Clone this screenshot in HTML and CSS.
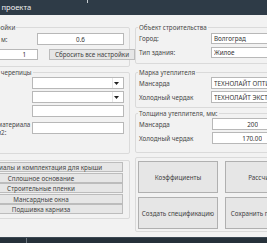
FILE: index.html
```html
<!DOCTYPE html>
<html lang="ru">

<head>
    <meta charset="UTF-8">
    <meta name="viewport" content="width=device-width, initial-scale=1.0">
    <title>Параметры проекта</title>
    <link rel="stylesheet" href="styles.css">
</head>

<body>
    <div class="screen">
        <div class="window">
            <div class="titlebar">
                <span class="title">Параметры проекта</span>
                <span class="tick"></span>
            </div>

            <div class="content">
                <div class="col col-left">
                    <fieldset class="group g-common">
                        <legend>Общие настройки</legend>
                        <div class="row row-step">
                            <label for="step">Длина ската, м:</label>
                            <input class="field center" type="text" id="step" value="0.6" readonly>
                        </div>
                        <div class="row row-reset">
                            <label for="slopes">Скатов:</label>
                            <input class="field num" type="text" id="slopes" value="1" readonly>
                            <button class="btn" type="button">Сбросить все настройки</button>
                        </div>
                    </fieldset>

                    <fieldset class="group g-tile">
                        <legend>Выбор цвета черепицы</legend>
                        <div class="row row-tile">
                            <label>Коллекция:</label>
                            <div class="field combo"><span class="combo-text"></span><span class="arrow"><svg width="5" height="3" viewBox="0 0 5 3"><path d="M0 0h5L2.5 3z" fill="#222"/></svg></span></div>
                        </div>
                        <div class="row row-tile">
                            <label>Цвет:</label>
                            <div class="field combo"><span class="combo-text"></span><span class="arrow"><svg width="5" height="3" viewBox="0 0 5 3"><path d="M0 0h5L2.5 3z" fill="#222"/></svg></span></div>
                        </div>
                        <div class="row row-tile">
                            <label for="slope">Уклон:</label>
                            <input class="field" type="text" id="slope" value="" readonly>
                        </div>
                        <div class="row row-tile">
                            <label for="pack" class="two-lines">Количество материала<br>в упаковке, м2:</label>
                            <input class="field" type="text" id="pack" value="" readonly>
                        </div>
                    </fieldset>

                    <div class="box g-materials">
                        <button class="btn" type="button">Материалы и комплектация для крыши</button>
                        <button class="btn" type="button">Сплошное основание</button>
                        <button class="btn" type="button">Строительные пленки</button>
                        <button class="btn" type="button">Мансардные окна</button>
                        <button class="btn" type="button">Подшивка карниза</button>
                    </div>
                </div>

                <div class="col col-right">
                    <fieldset class="group g-object">
                        <legend>Объект строительства</legend>
                        <div class="row row-info">
                            <label for="city">Город:</label>
                            <input class="field" type="text" id="city" value="Волгоград" readonly>
                        </div>
                        <div class="row row-info">
                            <label for="kind">Тип здания:</label>
                            <input class="field" type="text" id="kind" value="Жилое" readonly>
                        </div>
                    </fieldset>

                    <fieldset class="group g-brand">
                        <legend>Марка утеплителя</legend>
                        <div class="row row-info">
                            <label for="brand1">Мансарда</label>
                            <input class="field" type="text" id="brand1" value="ТЕХНОЛАЙТ ОПТИМА" readonly>
                        </div>
                        <div class="row row-info">
                            <label for="brand2">Холодный чердак</label>
                            <input class="field" type="text" id="brand2" value="ТЕХНОЛАЙТ ЭКСТРА" readonly>
                        </div>
                    </fieldset>

                    <fieldset class="group g-thick">
                        <legend>Толщина утеплителя, мм:</legend>
                        <div class="row row-info">
                            <label for="thick1">Мансарда</label>
                            <input class="field num spin" type="text" id="thick1" value="200" readonly>
                        </div>
                        <div class="row row-info">
                            <label for="thick2">Холодный чердак</label>
                            <input class="field num" type="text" id="thick2" value="170.00" readonly>
                        </div>
                    </fieldset>

                    <div class="box g-actions">
                        <button class="btn big" type="button">Коэффициенты</button>
                        <button class="btn big" type="button">Рассчитать</button>
                        <button class="btn big" type="button">Создать спецификацию</button>
                        <button class="btn big" type="button">Сохранить параметры</button>
                    </div>
                </div>
            </div>
        </div>

        <div class="taskbar">
            <span class="task"></span>
        </div>
    </div>
</body>

</html>
```

FILE: styles.css
```css
* {
    box-sizing: border-box;
}

body {
    margin: 0;
    background-color: #f2f2f2;
    font-family: "Noto Sans", "DejaVu Sans", sans-serif;
    font-size: 6.3px;
    color: #474747;
    overflow: hidden;
}

.screen {
    width: 267px;
    height: 243px;
    overflow: hidden;
}

.window {
    width: 460px;
    height: 237px;
    margin-left: -44px;
}

.titlebar {
    position: relative;
    height: 15px;
    background-color: #2e3b47;
    color: #f0f0f0;
    font-size: 7.6px;
    line-height: 15px;
}

.title {
    padding-left: 1px;
}

.tick {
    position: absolute;
    left: 131px;
    top: 0;
    width: 1px;
    height: 3px;
    background-color: #c9ced2;
}

.content {
    display: flex;
    align-items: flex-start;
    gap: 5px;
    padding-top: 8px;
}

.col {
    display: flex;
    flex-direction: column;
}

.col-left {
    width: 174px;
}

.col-right {
    width: 230px;
}

/* group boxes */
.group {
    margin: 0;
    min-width: 0;
    border: 1px solid #dadada;
    border-radius: 2px;
    padding: 0 5px 0 3px;
}

.group legend {
    margin-left: -1px;
    padding: 0 1px;
    font-size: 6.3px;
    line-height: 9px;
    color: #4a4a4a;
}

.box {
    border: 1px solid #dadada;
    border-radius: 2px;
}

.row {
    display: grid;
    align-items: center;
}

label {
    line-height: 7px;
    white-space: nowrap;
}

label.two-lines {
    line-height: 7.5px;
    padding-top: 2px;
}

/* inputs */
.field {
    display: block;
    width: 100%;
    height: 12px;
    margin: 0;
    border: 1px solid #b8b8b8;
    background-color: #fff;
    padding: 0 2px;
    font: inherit;
    color: #333;
}

.field.center {
    text-align: center;
}

.field.num {
    text-align: right;
    padding-right: 9px;
}

.row-reset .field.num {
    padding-right: 11px;
}

.field.spin {
    padding-right: 13px;
}

.combo {
    display: flex;
    justify-content: space-between;
}

.arrow {
    display: flex;
    align-items: center;
    justify-content: center;
    width: 8px;
    margin-right: 1px;
    border-left: 1px solid #e6e6e6;
}

.btn {
    margin: 0;
    padding: 0;
    border: 1px solid #bcbcbc;
    background-color: #e6e6e6;
    font: inherit;
    color: #444;
    cursor: pointer;
    white-space: nowrap;
}

.btn:hover {
    background-color: #e9f1fa;
}

/* left column */
.g-common .row-step {
    grid-template-columns: 77px 87px;
    margin-top: 1px;
}

.g-common .row-reset {
    grid-template-columns: 28px 39px 86px;
    column-gap: 11px;
    margin-top: 4px;
    margin-bottom: 6px;
}

.row-reset .field,
.row-reset .btn {
    height: 11px;
}

.g-tile {
    margin-top: 1px;
    padding-bottom: 17px;
}

.row-tile {
    grid-template-columns: 72px 92px;
    margin-top: 2px;
}

.row-tile:first-of-type {
    margin-top: 0;
}

.g-materials {
    display: flex;
    flex-direction: column;
    gap: 0.5px;
    margin-top: 6px;
    padding: 1px 6px 4px 2px;
}

.g-materials .btn {
    width: 164px;
    height: 10px;
}

/* right column */
.row-info {
    grid-template-columns: 72px 130px;
}

.g-object .row-info {
    margin-top: 3px;
}

.g-object .row-info:first-of-type {
    margin-top: 1px;
}

.g-object .field {
    height: 11px;
}

.g-object {
    padding-bottom: 5px;
}

.g-brand {
    margin-top: 4px;
    padding-bottom: 4px;
}

.g-thick {
    margin-top: 1px;
    padding-bottom: 8px;
}

.g-brand .row-info + .row-info,
.g-thick .row-info + .row-info {
    margin-top: 2px;
}

.g-thick .row-info {
    grid-template-columns: 73px 60px;
}

.g-actions {
    display: grid;
    grid-template-columns: 80px 80px;
    grid-auto-rows: 32px;
    gap: 4px 7px;
    margin-top: 4px;
    padding: 3px 2px 2px 2px;
}

.btn.big {
    background-color: #e6e6e6;
    border-color: #b0b0b0;
}

/* bottom strip */
.taskbar {
    height: 6px;
    background-color: #26313a;
    border-top: 1px solid #3c4853;
}

.task {
    display: block;
    width: 27px;
    height: 100%;
    border-right: 1px solid #6b757e;
}
```
